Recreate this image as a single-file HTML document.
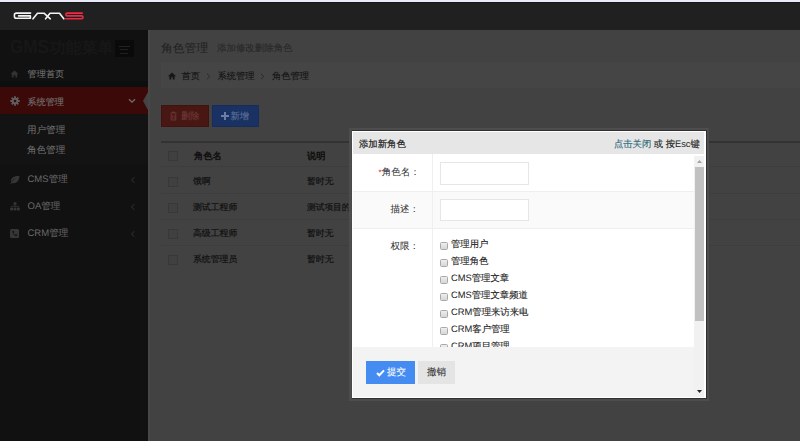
<!DOCTYPE html>
<html><head><meta charset="utf-8">
<style>
*{margin:0;padding:0;box-sizing:border-box}
html,body{width:800px;height:441px;overflow:hidden;background:#424242;font-family:"Liberation Sans",sans-serif;text-rendering:geometricPrecision}
.a{position:absolute;white-space:nowrap}
#top{position:absolute;left:0;top:0;width:800px;height:30px;background:#202020}
#topline{position:absolute;left:0;top:0;width:800px;height:2px;background:#e8eaf8}
#side{position:absolute;left:0;top:30px;width:148px;height:411px;background:#111}
#main{position:absolute;left:148px;top:30px;width:652px;height:411px;background:#424242}
.menu{color:#767676;font-size:9.2px;line-height:12px;-webkit-text-stroke:0.05px #767676}
.sub{color:#707070;font-size:9.55px;line-height:12px;-webkit-text-stroke:0.05px #707070}
.tb{font-size:8.85px;color:#101010;line-height:12px;-webkit-text-stroke:0.2px #101010}
.cb{position:absolute;width:10px;height:10px;border:1px solid #383838;background:#404040}
.lbl{font-size:9.5px;color:#333;line-height:12px;-webkit-text-stroke:0.05px #333}
.l{-webkit-text-stroke:0}
.inp{position:absolute;width:89.5px;height:22.5px;border:1px solid #e6e6e6;background:#fff}
.ck{position:absolute;left:86.75px;width:8px;height:8px;border:1px solid #a8a8a8;border-radius:1.5px;background:linear-gradient(#eeeeee,#d6d6d6)}
.ckt{font-size:9.36px;color:#222;line-height:12px;-webkit-text-stroke:0.12px #222}
</style></head><body>
<div id="top"></div>
<div id="topline"></div>
<div class="a" style="left:0;top:2px;width:800px;height:1px;background:#171717"></div>
<svg class="a" style="left:0;top:0" width="100" height="30" viewBox="0 0 100 30">
  <g fill="none" stroke="#f4f4f4" stroke-width="1.6" stroke-linejoin="round" stroke-linecap="round">
    <path d="M30.6 13.1 H16.4 Q14.4 13.1 14.4 15.1 V16.2 Q14.4 18.3 16.4 18.3 H30.4 V15.9 H18.6"/>
    <path d="M33 18.8 L37.5 13.2 H44 L50.3 18.8"/>
    <path d="M45.6 18.8 L50 13.2 H59.5 L63.8 18.8"/>
  </g>
  <path d="M82.3 13.1 H67.3 Q65.8 13.1 65.8 14.5 Q65.8 15.9 67.3 15.9 H81.5 Q83 15.9 83 17.3 Q83 18.7 81.5 18.7 H65.8" fill="none" stroke="#ea2b45" stroke-width="1.6" stroke-linecap="round" stroke-linejoin="round"/>
</svg>

<div id="side"></div>
<div class="a" style="left:9.5px;top:38px;font-size:19px;font-weight:bold;color:#171717;line-height:20px;transform:scaleX(0.9);transform-origin:0 0">GMS</div>
<div class="a" style="left:49.5px;top:39px;font-size:16px;font-weight:bold;color:#171717;line-height:20px">功能菜单</div>
<div class="a" style="left:114.5px;top:40px;width:19.5px;height:17px;background:#0a0a0a"></div>
<div class="a" style="left:119px;top:46px;width:11px;height:1px;background:#222"></div>
<div class="a" style="left:120px;top:48.8px;width:8px;height:1.2px;background:#1f1f1f"></div>
<div class="a" style="left:120px;top:53px;width:8px;height:1.2px;background:#1f1f1f"></div>

<!-- home -->
<svg class="a" style="left:10px;top:70px" width="9" height="8" viewBox="0 0 9 8"><path d="M4.5 0.5 L0.5 4 H1.8 V7.5 H3.6 V5.2 H5.4 V7.5 H7.2 V4 H8.5 Z" fill="#333"/></svg>
<div class="a menu" style="left:27.5px;top:68.3px">管理首页</div>

<div class="a" style="left:0;top:80.5px;width:148px;height:6.5px;background:#0d0e0e"></div>
<!-- active -->
<div class="a" style="left:0;top:87px;width:148px;height:27px;background:#3c0909"></div>
<svg class="a" style="left:9.5px;top:96px" width="10" height="10" viewBox="0 0 10 10"><g stroke="#5e5e5e" stroke-width="1.9"><path d="M5 0.3 V9.7 M0.3 5 H9.7 M1.7 1.7 L8.3 8.3 M8.3 1.7 L1.7 8.3"/></g><circle cx="5" cy="5" r="3.2" fill="#5e5e5e"/><circle cx="5" cy="5" r="1.3" fill="#3a0909"/></svg>
<div class="a menu" style="left:27.3px;top:95.8px;color:#727272;-webkit-text-stroke:0.1px #727272">系统管理</div>
<svg class="a" style="left:128px;top:98px" width="8" height="6" viewBox="0 0 8 6"><path d="M1 1.2 L4 4.2 L7 1.2" fill="none" stroke="#6f6f6f" stroke-width="1.3"/></svg>
<svg class="a" style="left:142px;top:91.5px" width="6" height="18" viewBox="0 0 6 18"><path d="M6 0 L1 9 L6 18 Z" fill="#444"/></svg>

<div class="a" style="left:0;top:114px;width:148px;height:50px;background:#131313"></div>
<div class="a sub" style="left:27px;top:124.5px">用户管理</div>

<div class="a sub" style="left:27px;top:145px">角色管理</div>

<svg class="a" style="left:9px;top:175px" width="11" height="10" viewBox="0 0 11 10"><path d="M10.5 1 C6 0.6 2 2 2 6 C2 6.5 2.1 7 2.3 7.3 C3 5.5 5 4 7 3.6 C5 4.5 3 6 1.2 9 L2 9.3 L2.8 8 C7.5 9 10 6 10.5 1 Z" fill="#363636"/></svg>
<div class="a menu" style="left:27.5px;top:174px;color:#6a6a6a;font-size:9.5px"><span class="l">CMS</span>管理</div>
<svg class="a" style="left:130px;top:176px" width="6" height="8" viewBox="0 0 6 8"><path d="M4.3 1.2 L1.6 4 L4.3 6.8" fill="none" stroke="#333" stroke-width="1"/></svg>

<svg class="a" style="left:10px;top:202px" width="10" height="9" viewBox="0 0 10 9"><g fill="#363636"><rect x="3.6" y="0.3" width="2.8" height="2.6"/><rect x="0.2" y="5.8" width="2.8" height="2.6"/><rect x="3.6" y="5.8" width="2.8" height="2.6"/><rect x="7" y="5.8" width="2.8" height="2.6"/></g><path d="M5 2.9 V5.8 M1.6 5.8 V4.3 H8.4 V5.8" fill="none" stroke="#363636" stroke-width="0.8"/></svg>
<div class="a menu" style="left:27.5px;top:201px;color:#6a6a6a;font-size:9.5px"><span class="l">OA</span>管理</div>
<svg class="a" style="left:130px;top:203px" width="6" height="8" viewBox="0 0 6 8"><path d="M4.3 1.2 L1.6 4 L4.3 6.8" fill="none" stroke="#333" stroke-width="1"/></svg>

<svg class="a" style="left:10px;top:229px" width="9" height="9" viewBox="0 0 9 9"><rect x="0" y="0" width="9" height="9" rx="1.5" fill="#363636"/><path d="M2.3 2 L3.6 1.8 L4.2 3.4 L3.4 4 Q4 5.4 5 5.9 L5.6 5.2 L7.2 5.8 L7 7.1 Q3 7.4 2.3 2 Z" fill="#111"/></svg>
<div class="a menu" style="left:27.5px;top:228px;color:#6a6a6a;font-size:9.5px"><span class="l">CRM</span>管理</div>
<svg class="a" style="left:130px;top:230px" width="6" height="8" viewBox="0 0 6 8"><path d="M4.3 1.2 L1.6 4 L4.3 6.8" fill="none" stroke="#333" stroke-width="1"/></svg>

<!-- main -->
<div id="main"></div>
<div class="a" style="left:148px;top:30px;width:2px;height:411px;background:#474747"></div>
<div class="a" style="left:161px;top:39.5px;font-size:11.8px;color:#1e1e1e;line-height:16px">角色管理</div>
<div class="a" style="left:217px;top:42.5px;font-size:9.45px;color:#282828;line-height:12px;-webkit-text-stroke:0.1px #282828">添加修改删除角色</div>

<div class="a" style="left:161px;top:62px;width:639px;height:26px;background:#454545"></div>
<svg class="a" style="left:168px;top:71.5px" width="8" height="8" viewBox="0 0 8 8"><path d="M4 0.5 L0.2 4 L0.8 4.6 L1.4 4.1 V7.5 H3.2 V5.3 H4.8 V7.5 H6.6 V4.1 L7.2 4.6 L7.8 4 Z" fill="#161616"/></svg>
<div class="a" style="left:181.5px;top:70px;font-size:9.25px;color:#121212;line-height:12px;-webkit-text-stroke:0.1px #121212">首页</div>
<svg class="a" style="left:205.5px;top:72.5px" width="5" height="7" viewBox="0 0 5 7"><path d="M1 0.8 L3.8 3.5 L1 6.2" fill="none" stroke="#2a2a2a" stroke-width="1"/></svg>
<div class="a" style="left:217.5px;top:70px;font-size:9.25px;color:#121212;line-height:12px;-webkit-text-stroke:0.1px #121212">系统管理</div>
<svg class="a" style="left:260px;top:72.5px" width="5" height="7" viewBox="0 0 5 7"><path d="M1 0.8 L3.8 3.5 L1 6.2" fill="none" stroke="#2a2a2a" stroke-width="1"/></svg>
<div class="a" style="left:272px;top:70px;font-size:9.25px;color:#121212;line-height:12px;-webkit-text-stroke:0.1px #121212">角色管理</div>

<div class="a" style="left:161px;top:105px;width:48px;height:22px;background:#481613;border:1px solid #401311"></div>
<svg class="a" style="left:170px;top:111px" width="7" height="10" viewBox="0 0 7 10"><path d="M0.5 2 H6.5 M2.5 2 V1 H4.5 V2 M1.2 3 V9 H5.8 V3" fill="none" stroke="#6a3835" stroke-width="1"/><path d="M2.7 4 V8 M4.3 4 V8" stroke="#6a3835" stroke-width="0.7"/></svg>
<div class="a" style="left:181px;top:110px;font-size:9.3px;color:#6e3c39;line-height:12px;-webkit-text-stroke:0.1px #6e3c39">删除</div>
<div class="a" style="left:212px;top:105px;width:47px;height:22px;background:#1a3163;border:1px solid #172c5a"></div>
<div class="a" style="left:221px;top:115px;width:8px;height:1.6px;background:#6b7fa3"></div>
<div class="a" style="left:224.2px;top:111.8px;width:1.6px;height:8px;background:#6b7fa3"></div>
<div class="a" style="left:230.5px;top:110px;font-size:9.3px;color:#5d7298;line-height:12px;-webkit-text-stroke:0.1px #5d7298">新增</div>

<div class="a" style="left:161px;top:141px;width:639px;height:2px;background:#333"></div>
<div class="a" style="left:161px;top:166px;width:639px;height:1px;background:#3d3d3d"></div>
<div class="a" style="left:161px;top:193px;width:639px;height:1px;background:#3d3d3d"></div>
<div class="a" style="left:161px;top:219px;width:639px;height:1px;background:#3d3d3d"></div>
<div class="a" style="left:161px;top:245px;width:639px;height:1px;background:#3d3d3d"></div>

<div class="cb" style="left:168px;top:150.8px"></div>
<div class="a tb" style="left:194px;top:150px;font-size:9.2px;-webkit-text-stroke:0.45px #101010">角色名</div>
<div class="a tb" style="left:307px;top:150px;font-size:9.2px;-webkit-text-stroke:0.45px #101010">说明</div>
<div class="cb" style="left:168px;top:176.8px"></div>
<div class="a tb" style="left:193px;top:175px">饿啊</div>
<div class="a tb" style="left:307px;top:175px">暂时无</div>
<div class="cb" style="left:168px;top:202.8px"></div>
<div class="a tb" style="left:193px;top:201px">测试工程师</div>
<div class="a tb" style="left:307px;top:201px;font-size:8.7px">测试项目的</div>
<div class="cb" style="left:168px;top:228.8px"></div>
<div class="a tb" style="left:193px;top:227px">高级工程师</div>
<div class="a tb" style="left:307px;top:227px">暂时无</div>
<div class="cb" style="left:168px;top:254.8px"></div>
<div class="a tb" style="left:193px;top:253px">系统管理员</div>
<div class="a tb" style="left:307px;top:253px">暂时无</div>

<!-- modal -->
<div class="a" style="left:349px;top:128px;width:360px;height:273px;background:#4d4d4d"></div>
<div class="a" style="left:351px;top:130px;width:356px;height:269px;background:#303030;border-left:1px solid #4a4a4a"></div>
<div class="a" style="left:352px;top:131px;width:354px;height:267px;background:#fff"></div>
<div class="a" style="left:353px;top:132px;width:351px;height:22px;background:#e6e6e6"></div>
<div class="a" style="left:359px;top:137.5px;font-size:9.35px;color:#222;line-height:12px;-webkit-text-stroke:0.2px #222">添加新角色</div>
<div class="a" style="left:614px;top:137.5px;font-size:9.3px;color:#222;line-height:12px;-webkit-text-stroke:0.15px #222"><span style="color:#2d6a78;-webkit-text-stroke:0.15px #2d6a78">点击关闭</span> 或 按<span class="l">Esc</span>键</div>

<div class="a" style="left:353px;top:191px;width:341px;height:1px;background:#efefef"></div>
<div class="a" style="left:353px;top:192px;width:341px;height:36px;background:#fafafa"></div>
<div class="a" style="left:353px;top:228px;width:341px;height:1px;background:#efefef"></div>
<div class="a" style="left:432px;top:154px;width:1px;height:193px;background:#efefef"></div>

<div class="a lbl" style="left:378.5px;top:166.5px"><span style="color:#e23;font-size:8px">*</span>角色名：</div>
<div class="inp" style="left:439.5px;top:162px"></div>
<div class="a lbl" style="left:390.5px;top:203.5px">描述：</div>
<div class="inp" style="left:439.5px;top:198.5px"></div>
<div class="a lbl" style="left:390.5px;top:240.5px">权限：</div>

<div style="position:absolute;left:353px;top:154px;width:341px;height:193px;overflow:hidden">
  <div class="ck" style="top:87.5px"></div><div class="a ckt" style="left:98px;top:83.5px">管理用户</div>
  <div class="ck" style="top:104.5px"></div><div class="a ckt" style="left:98px;top:100.5px">管理角色</div>
  <div class="ck" style="top:121.5px"></div><div class="a ckt" style="left:98px;top:117.5px"><span class="l">CMS</span>管理文章</div>
  <div class="ck" style="top:138.5px"></div><div class="a ckt" style="left:98px;top:134.5px"><span class="l">CMS</span>管理文章频道</div>
  <div class="ck" style="top:155.5px"></div><div class="a ckt" style="left:98px;top:151.5px"><span class="l">CRM</span>管理来访来电</div>
  <div class="ck" style="top:172.5px"></div><div class="a ckt" style="left:98px;top:168.5px"><span class="l">CRM</span>客户管理</div>
  <div class="ck" style="top:189.5px"></div><div class="a ckt" style="left:98px;top:185.5px"><span class="l">CRM</span>项目管理</div>
</div>

<div class="a" style="left:353px;top:347px;width:341px;height:50px;background:#f3f3f3"></div>
<div class="a" style="left:366px;top:361px;width:49px;height:22.5px;background:#458cf2"></div>
<svg class="a" style="left:375.5px;top:368.5px" width="9" height="8" viewBox="0 0 9 8"><path d="M1 4 L3.3 6.3 L8 1.4" fill="none" stroke="#fff" stroke-width="2"/></svg>
<div class="a" style="left:387px;top:366.7px;font-size:9.5px;color:#fff;line-height:12px;-webkit-text-stroke:0.1px #fff">提交</div>
<div class="a" style="left:418px;top:361px;width:37px;height:22.5px;background:#e4e4e4"></div>
<div class="a" style="left:427px;top:366.7px;font-size:9.5px;color:#333;line-height:12px;-webkit-text-stroke:0.1px #333">撤销</div>

<!-- scrollbar -->
<div class="a" style="left:694px;top:156px;width:10px;height:241px;background:#f1f1f1"></div>
<div class="a" style="left:695px;top:166.5px;width:9px;height:154.5px;background:#c1c1c1"></div>
<svg class="a" style="left:697px;top:160px" width="5" height="3" viewBox="0 0 5 3"><path d="M0 3 L2.5 0 L5 3Z" fill="#a3a3a3"/></svg>
<svg class="a" style="left:697px;top:389.5px" width="5" height="3" viewBox="0 0 5 3"><path d="M0 0 L2.5 3 L5 0Z" fill="#222"/></svg>
</body></html>
